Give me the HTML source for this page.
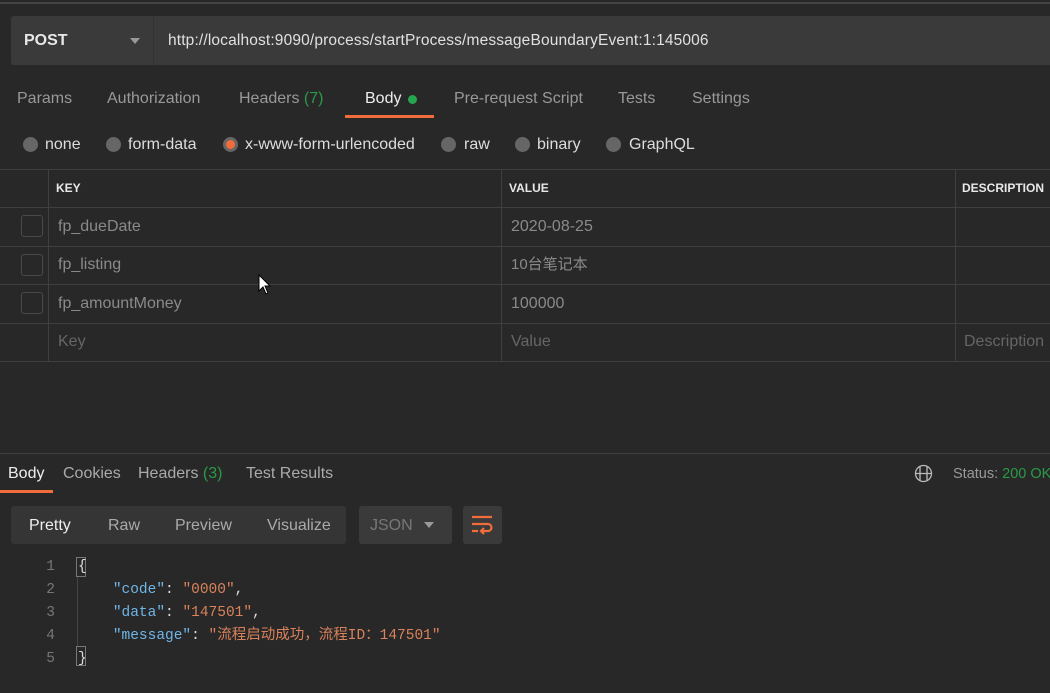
<!DOCTYPE html>
<html><head><meta charset="utf-8"><style>
*{margin:0;padding:0;box-sizing:border-box}
body{width:1050px;height:693px;overflow:hidden;background:#282828;font-family:"Liberation Sans","Noto Sans CJK SC",sans-serif;color:#ccc;position:relative;font-size:16px}
.a{position:absolute;white-space:nowrap}
.hl{position:absolute;height:1px;background:#3f3f3f;left:0;width:1050px}
.vl{position:absolute;width:1px;background:#3f3f3f}
.rad{position:absolute;width:15px;height:15px;border-radius:50%;background:#666;top:137px}
.cb{position:absolute;left:21px;width:22px;height:22px;border:1px solid #4a4a4a;border-radius:3px}
.g{color:#8a8a8a}
.mono{font-family:"Liberation Mono","Noto Sans CJK SC",monospace;font-size:14.5px}
</style></head><body>
<div class="hl" style="top:2px;background:#444;height:2px"></div>
<div class="a" style="left:11px;top:16px;width:1039px;height:49px;background:#3a3a3a;border-radius:3px 0 0 3px"></div>
<div class="a" style="left:153px;top:16px;width:1px;height:49px;background:#333"></div>
<div class="a" style="left:24px;top:32px;font-weight:bold;color:#e8e8e8">POST</div>
<div class="a" style="left:130px;top:38px;width:0;height:0;border-left:5px solid transparent;border-right:5px solid transparent;border-top:6px solid #999"></div>
<div class="a" style="left:168px;top:32px;color:#e0e0e0;font-size:15.5px;letter-spacing:0.15px">http://localhost:9090/process/startProcess/messageBoundaryEvent:1:145006</div>

<div class="a g" style="left:17px;top:90px;color:#999">Params</div>
<div class="a" style="left:107px;top:90px;color:#999">Authorization</div>
<div class="a" style="left:239px;top:90px;color:#999">Headers <span style="color:#2b9a46">(7)</span></div>
<div class="a" style="left:365px;top:90px;color:#eee">Body</div>
<div class="a" style="left:408px;top:95px;width:9px;height:9px;border-radius:50%;background:#26a550"></div>
<div class="a" style="left:345px;top:115px;width:89px;height:3px;background:#f26b3a"></div>
<div class="a" style="left:454px;top:90px;color:#999">Pre-request Script</div>
<div class="a" style="left:618px;top:90px;color:#999">Tests</div>
<div class="a" style="left:692px;top:90px;color:#999">Settings</div>

<div class="rad" style="left:23px"></div><div class="a" style="left:45px;top:136px;color:#ddd">none</div>
<div class="rad" style="left:106px"></div><div class="a" style="left:128px;top:136px;color:#ddd">form-data</div>
<div class="rad" style="left:223px;background:#f26b3a;border:3px solid #666"></div><div class="a" style="left:245px;top:136px;color:#ddd">x-www-form-urlencoded</div>
<div class="rad" style="left:441px"></div><div class="a" style="left:464px;top:136px;color:#ddd">raw</div>
<div class="rad" style="left:515px"></div><div class="a" style="left:537px;top:136px;color:#ddd">binary</div>
<div class="rad" style="left:606px"></div><div class="a" style="left:629px;top:136px;color:#ddd">GraphQL</div>

<div class="hl" style="top:169px"></div>
<div class="hl" style="top:207px"></div>
<div class="hl" style="top:246px"></div>
<div class="hl" style="top:284px"></div>
<div class="hl" style="top:323px"></div>
<div class="hl" style="top:361px"></div>
<div class="vl" style="left:48px;top:169px;height:193px"></div>
<div class="vl" style="left:501px;top:169px;height:193px"></div>
<div class="vl" style="left:955px;top:169px;height:193px"></div>
<div class="a" style="left:56px;top:181px;font-size:12px;font-weight:bold;color:#e8e8e8">KEY</div>
<div class="a" style="left:509px;top:181px;font-size:12px;font-weight:bold;color:#e8e8e8">VALUE</div>
<div class="a" style="left:962px;top:181px;font-size:12px;font-weight:bold;color:#e8e8e8">DESCRIPTION</div>
<div class="cb" style="top:215px"></div><div class="cb" style="top:254px"></div><div class="cb" style="top:292px"></div>
<div class="a g" style="left:58px;top:218px">fp_dueDate</div><div class="a g" style="left:511px;top:218px">2020-08-25</div>
<div class="a g" style="left:58px;top:256px">fp_listing</div><div class="a g" style="left:511px;top:253px;font-size:15px">10台笔记本</div>
<div class="a g" style="left:58px;top:295px">fp_amountMoney</div><div class="a g" style="left:511px;top:295px">100000</div>
<div class="a" style="left:58px;top:333px;color:#666">Key</div><div class="a" style="left:511px;top:333px;color:#666">Value</div><div class="a" style="left:964px;top:333px;color:#666">Description</div>
<svg class="a" style="left:258px;top:274px" width="14" height="22"><path d="M1 1 L1 17 L5 13 L8 20 L10 19 L7 12 L12 12 Z" fill="#fff" stroke="#000"/></svg>

<div class="hl" style="top:453px"></div>
<div class="a" style="left:8px;top:465px;color:#eee">Body</div>
<div class="a" style="left:0;top:490px;width:53px;height:3px;background:#f26b3a"></div>
<div class="a" style="left:63px;top:465px;color:#aaa">Cookies</div>
<div class="a" style="left:138px;top:465px;color:#aaa">Headers <span style="color:#2b9a46">(3)</span></div>
<div class="a" style="left:246px;top:465px;color:#aaa">Test Results</div>
<svg class="a" style="left:914px;top:464px" width="19" height="19" fill="none" stroke="#bbb" stroke-width="1.3"><circle cx="9.5" cy="9.5" r="8"/><path d="M6 2.5v14M13 2.5v14M1.5 9.5h16"/></svg>
<div class="a" style="left:953px;top:466px;color:#999;font-size:14.5px">Status: <span style="color:#2b9a46">200 OK</span></div>

<div class="a" style="left:11px;top:506px;width:335px;height:38px;background:#353535;border-radius:3px"></div>
<div class="a" style="left:29px;top:517px;color:#eee">Pretty</div>
<div class="a" style="left:108px;top:517px;color:#aaa">Raw</div>
<div class="a" style="left:175px;top:517px;color:#aaa">Preview</div>
<div class="a" style="left:267px;top:517px;color:#aaa">Visualize</div>
<div class="a" style="left:359px;top:506px;width:93px;height:38px;background:#3a3a3a;border-radius:3px"></div>
<div class="a" style="left:370px;top:517px;color:#777">JSON</div>
<div class="a" style="left:424px;top:522px;border-left:5px solid transparent;border-right:5px solid transparent;border-top:6px solid #999"></div>
<div class="a" style="left:463px;top:506px;width:39px;height:38px;background:#3a3a3a;border-radius:3px"></div>
<svg class="a" style="left:471px;top:515px" width="24" height="20" fill="none" stroke="#f26b3a" stroke-width="2.2"><path d="M1 2h20M1 9h16a3.5 3.5 0 0 1 0 7H10M13 13l-3 3 3 3M1 16h6"/></svg>

<div class="a mono" style="left:45px;top:556px;color:#777;line-height:23px;text-align:right;width:10px">1<br>2<br>3<br>4<br>5</div>
<div class="a" style="left:76px;top:557px;width:10px;height:20px;border:1px solid #777"></div>
<div class="a" style="left:76px;top:646px;width:10px;height:20px;border:1px solid #777"></div>
<div class="a" style="left:77px;top:577px;width:1px;height:69px;background:#444"></div>
<div class="a mono" style="left:78px;top:556px;line-height:23px;color:#ddd">{<br>&nbsp;&nbsp;&nbsp;&nbsp;<span style="color:#6fb6e8">"code"</span>: <span style="color:#d9825b">"0000"</span>,<br>&nbsp;&nbsp;&nbsp;&nbsp;<span style="color:#6fb6e8">"data"</span>: <span style="color:#d9825b">"147501"</span>,<br>&nbsp;&nbsp;&nbsp;&nbsp;<span style="color:#6fb6e8">"message"</span>: <span style="color:#d9825b">"流程启动成功，流程ID：147501"</span><br>}</div>
</body></html>
